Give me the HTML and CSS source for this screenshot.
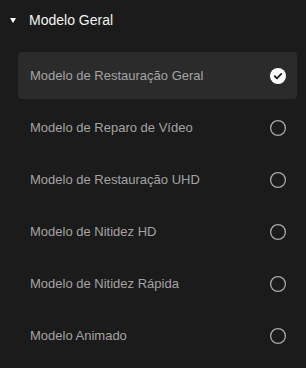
FILE: index.html
```html
<!DOCTYPE html>
<html lang="pt">
<head>
<meta charset="utf-8">
<link rel="stylesheet" href="styles.css">
</head>
<body>
<div class="panel">
  <div class="group-header">
    <span class="caret"></span>
    <span class="group-title">Modelo Geral</span>
  </div>
  <ul class="model-list">
    <li class="model-item selected"><span class="model-name">Modelo de Restauração Geral</span>
      <svg class="radio" width="18" height="18" viewBox="0 0 18 18"><circle cx="9" cy="9" r="8" fill="#fff"/><path d="M5.7 9.2 L7.9 11.3 L12.3 6.9" fill="none" stroke="#1b1b1b" stroke-width="1.8" stroke-linecap="round" stroke-linejoin="round"/></svg>
    </li>
    <li class="model-item"><span class="model-name">Modelo de Reparo de Vídeo</span>
      <svg class="radio" width="18" height="18" viewBox="0 0 18 18"><circle cx="9" cy="9" r="7.4" fill="none" stroke="#a8a8a8" stroke-width="1.3"/></svg>
    </li>
    <li class="model-item"><span class="model-name">Modelo de Restauração UHD</span>
      <svg class="radio" width="18" height="18" viewBox="0 0 18 18"><circle cx="9" cy="9" r="7.4" fill="none" stroke="#a8a8a8" stroke-width="1.3"/></svg>
    </li>
    <li class="model-item"><span class="model-name">Modelo de Nitidez HD</span>
      <svg class="radio" width="18" height="18" viewBox="0 0 18 18"><circle cx="9" cy="9" r="7.4" fill="none" stroke="#a8a8a8" stroke-width="1.3"/></svg>
    </li>
    <li class="model-item"><span class="model-name">Modelo de Nitidez Rápida</span>
      <svg class="radio" width="18" height="18" viewBox="0 0 18 18"><circle cx="9" cy="9" r="7.4" fill="none" stroke="#a8a8a8" stroke-width="1.3"/></svg>
    </li>
    <li class="model-item"><span class="model-name">Modelo Animado</span>
      <svg class="radio" width="18" height="18" viewBox="0 0 18 18"><circle cx="9" cy="9" r="7.4" fill="none" stroke="#a8a8a8" stroke-width="1.3"/></svg>
    </li>
  </ul>
</div>
</body>
</html>
```
FILE: styles.css
```css
html, body {
  margin: 0;
  padding: 0;
  background: #1b1b1b;
}
body {
  font-family: "Liberation Sans", Arial, sans-serif;
  width: 306px;
  height: 368px;
  overflow: hidden;
}
.panel {
  display: flex;
  flex-direction: column;
}
.group-header {
  display: flex;
  align-items: center;
  height: 40px;
  padding-left: 10px;
  box-sizing: border-box;
}
.caret {
  width: 0;
  height: 0;
  border-left: 3.5px solid transparent;
  border-right: 3.5px solid transparent;
  border-top: 5px solid #ffffff;
  margin-right: 13px;
}
.group-title {
  color: #f2f2f2;
  font-size: 14px;
  line-height: 16px;
}
.model-list {
  list-style: none;
  margin: 12px 9px 0 18px;
  padding: 0;
  display: flex;
  flex-direction: column;
  gap: 5px;
}
.model-item {
  display: flex;
  align-items: center;
  justify-content: space-between;
  height: 47px;
  padding: 0 10px 0 12px;
  border-radius: 4px;
  box-sizing: border-box;
}
.model-item.selected {
  background: #2b2b2b;
}
.model-name {
  color: #a3a3a3;
  font-size: 13px;
}
.radio {
  display: block;
  flex: none;
}
```
